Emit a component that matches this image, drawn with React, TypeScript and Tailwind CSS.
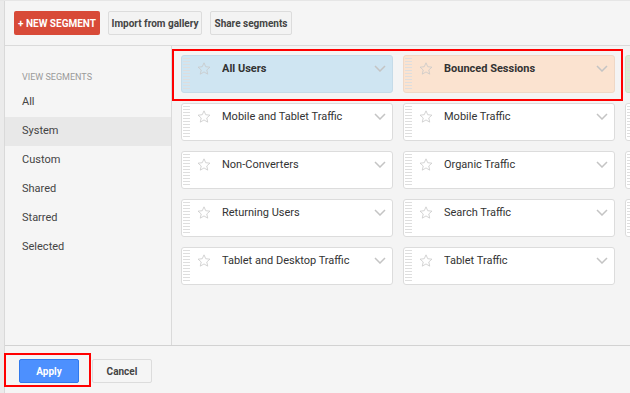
type Segment = {
  name: string
  tone?: 'blue' | 'orange' | 'green'
  offscreen?: boolean
}

// third column runs past the right edge, only its handles show
const segments: Segment[] = [
  { name: 'All Users', tone: 'blue' },
  { name: 'Bounced Sessions', tone: 'orange' },
  { name: 'Converters', tone: 'green', offscreen: true },
  { name: 'Mobile and Tablet Traffic' },
  { name: 'Mobile Traffic' },
  { name: 'Multi-session Users', offscreen: true },
  { name: 'Non-Converters' },
  { name: 'Organic Traffic' },
  { name: 'Paid Traffic', offscreen: true },
  { name: 'Returning Users' },
  { name: 'Search Traffic' },
  { name: 'Single Session Users', offscreen: true },
  { name: 'Tablet and Desktop Traffic' },
  { name: 'Tablet Traffic' },
]

const viewOptions = ['All', 'System', 'Custom', 'Shared', 'Starred', 'Selected']

const toneClasses = {
  blue: 'bg-[#cfe5f2] border-[#c5dbe8]',
  orange: 'bg-[#fbe3d0] border-[#efd8c6]',
  green: 'bg-[#d9ebd3] border-[#cfe0c9]',
}

function StarIcon() {
  return (
    <svg width="14" height="13" viewBox="0 0 24 23" fill="none" stroke="#c9c9c9" strokeWidth="1.4">
      <path d="M12 1.5l3.1 6.9 7.4.7-5.6 5 1.7 7.4L12 17.6l-6.6 3.9 1.7-7.4-5.6-5 7.4-.7z" strokeLinejoin="round" />
    </svg>
  )
}

function ChevronIcon() {
  return (
    <svg width="12" height="7" viewBox="0 0 12 7" fill="none" stroke="#c4c4c4" strokeWidth="1.5">
      <polyline points="1,1 6,6 11,1" />
    </svg>
  )
}

function SegmentCard({ segment }: { segment: Segment }) {
  const colors = segment.tone ? toneClasses[segment.tone] : 'bg-white border-[#dcdcdc]'

  return (
    <div className={`flex h-[38px] min-w-0 rounded-[3px] border ${colors}`}>
      <div className="ml-[1px] mt-[2px] mb-[1px] w-[7px] shrink-0 bg-[repeating-linear-gradient(to_bottom,#dedede_0,#dedede_1px,transparent_1px,transparent_3px)]" />
      {segment.offscreen ? null : (
        <>
          <div className="ml-[7px] mt-[6px] h-[14px] shrink-0">
            <StarIcon />
          </div>
          <span
            className={`ml-[11px] mt-[5px] flex-1 truncate text-[11px] leading-[16px] text-[#333] ${
              segment.tone ? 'font-bold' : ''
            }`}
          >
            {segment.name}
          </span>
          <div className="mr-[6px] mt-[9px] shrink-0">
            <ChevronIcon />
          </div>
        </>
      )}
    </div>
  )
}

export default function App() {
  return (
    <div className="flex h-[393px] w-[630px] overflow-hidden border-t border-[#e6e6e6] bg-[#f5f5f5] font-['Roboto',sans-serif]">
      <div className="w-[5px] shrink-0 border-r border-[#d9d9d9] bg-[#ebebeb]" />

      <div className="flex min-w-0 flex-1 flex-col">
        <div className="flex h-[45px] shrink-0 items-center gap-[8px] border-b border-[#dadada] pl-[9px]">
          <button
            className="h-[24px] w-[86px] shrink-0 rounded-[2px] bg-[#d84a38] text-[10px] font-bold text-white"
            type="button"
          >
            + NEW SEGMENT
          </button>
          <button
            className="h-[24px] w-[94px] shrink-0 rounded-[2px] border border-[#dcdcdc] bg-[#f3f3f3] text-[10px] font-bold text-[#444]"
            type="button"
          >
            Import from gallery
          </button>
          <button
            className="h-[24px] w-[82px] shrink-0 rounded-[2px] border border-[#dcdcdc] bg-[#f3f3f3] text-[10px] font-bold text-[#444]"
            type="button"
          >
            Share segments
          </button>
        </div>

        <div className="flex h-[300px] shrink-0 border-b border-[#d2d2d2]">
          <aside className="w-[167px] shrink-0 border-r border-[#dadada] pt-[25px]">
            <p className="mb-[5px] pl-[17px] text-[9px] leading-[12px] text-[#9a9a9a]">VIEW SEGMENTS</p>
            {viewOptions.map((option) => (
              <div
                className={`flex h-[29px] items-center pl-[17px] text-[11px] text-[#444] ${
                  option === 'System' ? 'bg-[#e8e8e8]' : ''
                }`}
                key={option}
              >
                {option}
              </div>
            ))}
          </aside>

          <main className="relative min-w-0 flex-1 overflow-hidden bg-[#f4f4f4]">
            <div className="grid grid-cols-[212px_212px_212px] gap-[10px] pl-[9px] pt-[9px]">
              {segments.map((segment) => (
                <SegmentCard key={segment.name} segment={segment} />
              ))}
            </div>
            <div className="absolute left-0 top-[3px] h-[52px] w-[451px] border-2 border-[#ff0000]" />
          </main>
        </div>

        <div className="relative flex flex-1 items-start gap-[13px] pl-[14px] pt-[13px]">
          <button
            className="h-[24px] w-[60px] shrink-0 rounded-[2px] border border-[#3079ed] bg-[#4d90fe] text-[10px] font-bold text-white"
            type="button"
          >
            Apply
          </button>
          <button
            className="h-[24px] w-[60px] shrink-0 rounded-[2px] border border-[#dcdcdc] bg-[#f5f5f5] text-[10px] font-bold text-[#444]"
            type="button"
          >
            Cancel
          </button>
          <div className="absolute left-[-1px] top-[7px] h-[34px] w-[87px] border-2 border-[#ff0000]" />
        </div>
      </div>
    </div>
  )
}
